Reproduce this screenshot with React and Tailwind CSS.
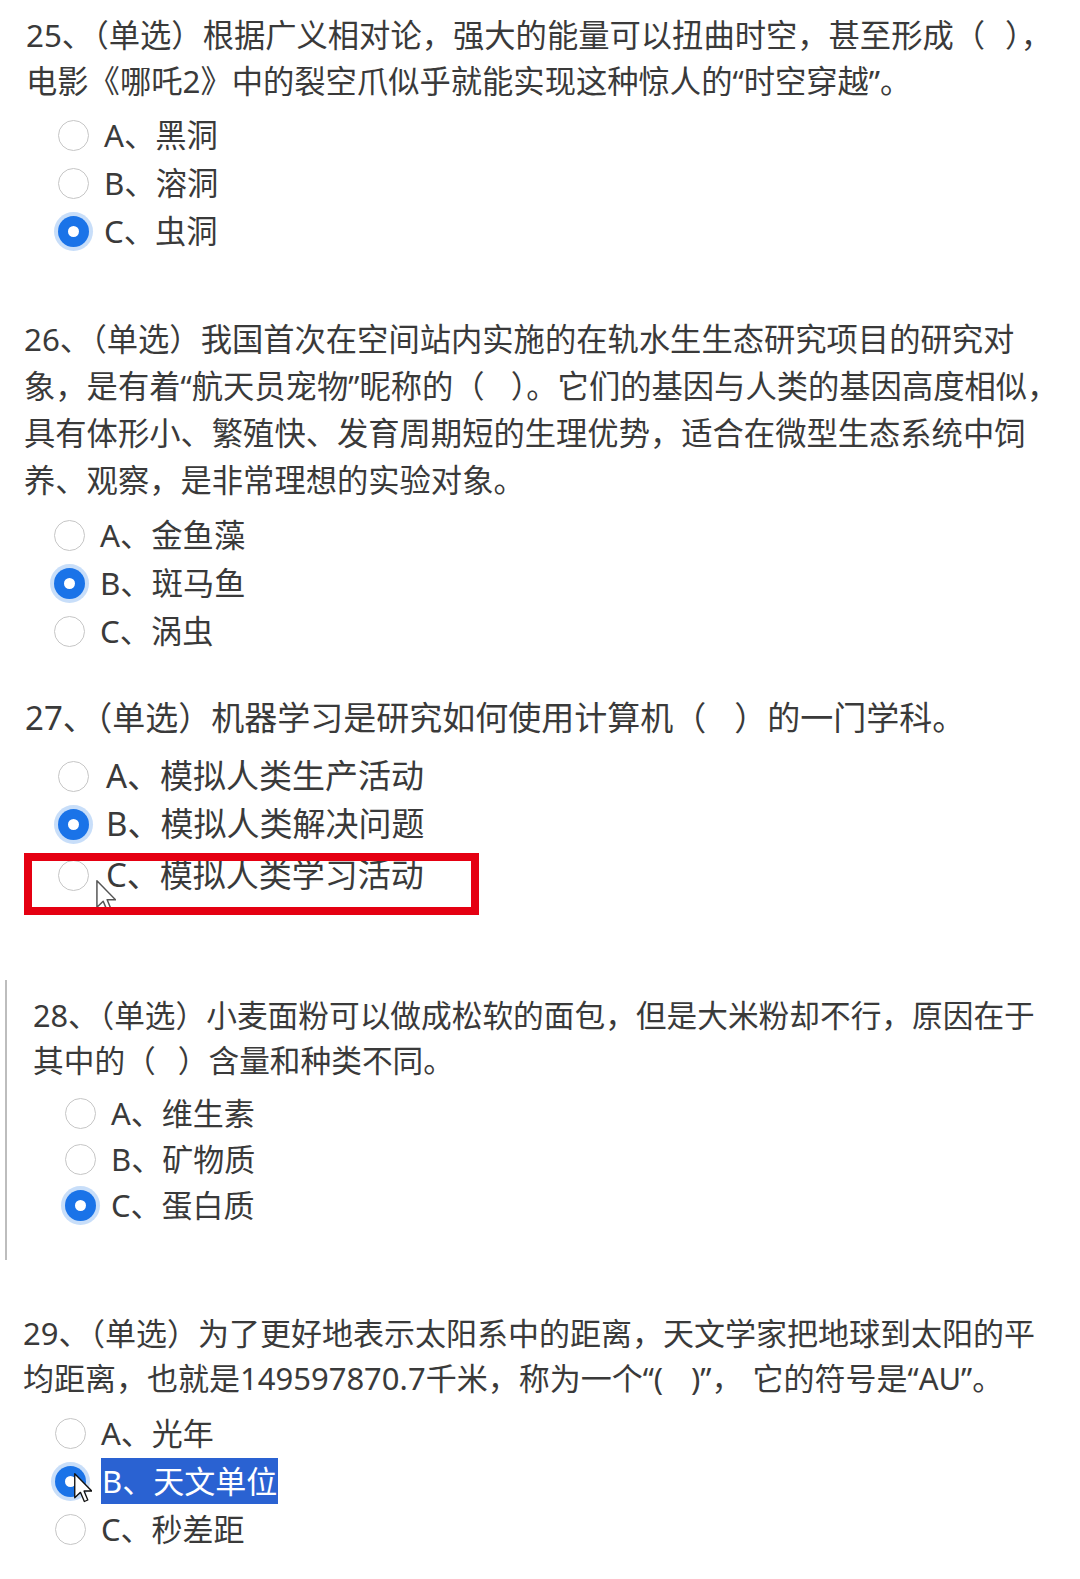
import React from 'react';

const Radio = ({ checked }) =>
  checked ? (
    <span className="flex h-[31px] w-[31px] shrink-0 items-center justify-center rounded-full bg-[#1a73e8] shadow-[0_0_0_4px_rgba(26,115,232,0.24)]">
      <span className="h-[11px] w-[11px] rounded-full bg-white" />
    </span>
  ) : (
    <span className="h-[31px] w-[31px] shrink-0 rounded-full border-[1.5px] border-[#c6c6c6] bg-white" />
  );

const Cursor = ({ className, fill, stroke, w = 18, h = 30 }) => (
  <svg className={className} viewBox="0 0 12 20" width={w} height={h}>
    <path d="M0.5 0.5 L0.5 16.5 L4.3 12.9 L6.9 19 L9.2 18 L6.7 12 L11.8 12 Z" fill={fill} stroke={stroke} strokeWidth="0.9" strokeLinejoin="round" />
  </svg>
);

// blank in the question text: （   ）
const Blank = ({ gap }) => (
  <>
    （<span className={`inline-block ${gap}`} />）
  </>
);

const Option = ({ label, checked, rowCls, gapCls, children }) => (
  <div className={`relative flex items-center ${rowCls}`}>
    <Radio checked={checked} />
    <span className={gapCls}>{label}</span>
    {children}
  </div>
);

export default function App() {
  return (
    <div className="min-h-[1579px] w-[1080px] bg-white pt-[12px] font-['Noto_Sans','Noto_Sans_CJK_SC',sans-serif] text-[#3a3a3a]">
      {/* 25 */}
      <section className="text-[31.3px]">
        <p className="whitespace-nowrap pl-[26px] leading-[46px]">
          25、（单选）根据广义相对论，强大的能量可以扭曲时空，甚至形成<Blank gap="w-[20px]" />，
          <br />
          电影《哪吒2》中的裂空爪似乎就能实现这种惊人的“时空穿越”。
        </p>
        <div className="mt-[7px]">
          <Option label="A、黑洞" rowCls="h-[48px] pl-[58px]" gapCls="ml-[15px]" />
          <Option label="B、溶洞" rowCls="h-[48px] pl-[58px]" gapCls="ml-[15px]" />
          <Option label="C、虫洞" checked rowCls="h-[48px] pl-[58px]" gapCls="ml-[15px]" />
        </div>
      </section>

      {/* 26 */}
      <section className="mt-[61px] text-[31.3px]">
        <p className="whitespace-nowrap pl-[24px] leading-[47px]">
          26、（单选）我国首次在空间站内实施的在轨水生生态研究项目的研究对
          <br />
          象，是有着“航天员宠物”昵称的<Blank gap="w-[26px]" />。它们的基因与人类的基因高度相似，
          <br />
          具有体形小、繁殖快、发育周期短的生理优势，适合在微型生态系统中饲
          <br />
          养、观察，是非常理想的实验对象。
        </p>
        <div className="mt-[7px]">
          <Option label="A、金鱼藻" rowCls="h-[48px] pl-[54px]" gapCls="ml-[15px]" />
          <Option label="B、斑马鱼" checked rowCls="h-[48px] pl-[54px]" gapCls="ml-[15px]" />
          <Option label="C、涡虫" rowCls="h-[48px] pl-[54px]" gapCls="ml-[15px]" />
        </div>
      </section>

      {/* 27 */}
      <section className="mt-[40px] text-[33px]">
        <p className="whitespace-nowrap pl-[25px] leading-[46px]">
          27、（单选）机器学习是研究如何使用计算机<Blank gap="w-[28px]" />的一门学科。
        </p>
        <div className="mt-[11px]">
          <Option label="A、模拟人类生产活动" rowCls="h-[48px] pl-[58px]" gapCls="ml-[17px]" />
          <Option label="B、模拟人类解决问题" checked rowCls="h-[48px] pl-[58px]" gapCls="ml-[17px]" />
          <Option label="C、模拟人类学习活动" rowCls="mt-[3px] h-[48px] pl-[58px]" gapCls="ml-[17px]">
            <Cursor className="absolute left-[96px] top-[29px]" fill="rgba(255,255,255,0.6)" stroke="#555" w={20} h={33} />
            <div className="absolute left-[24px] top-[2px] h-[62px] w-[455px] border-[8px] border-[#e50012]" />
          </Option>
        </div>
      </section>

      {/* 28 */}
      <section className="ml-[5px] mt-[81px] border-l-2 border-[#bdbdbd] pb-[32px] pt-[13px] text-[31px]">
        <p className="whitespace-nowrap pl-[26px] text-[30.7px] leading-[45px]">
          28、（单选）小麦面粉可以做成松软的面包，但是大米粉却不行，原因在于
          <br />
          其中的<Blank gap="w-[22px]" />含量和种类不同。
        </p>
        <div className="mt-[7px]">
          <Option label="A、维生素" rowCls="h-[46px] pl-[58px]" gapCls="ml-[15px]" />
          <Option label="B、矿物质" rowCls="h-[46px] pl-[58px]" gapCls="ml-[15px]" />
          <Option label="C、蛋白质" checked rowCls="h-[46px] pl-[58px]" gapCls="ml-[15px]" />
        </div>
      </section>

      {/* 29 */}
      <section className="mt-[51px] text-[31px]">
        <p className="whitespace-nowrap pl-[23px] leading-[45px]">
          29、（单选）为了更好地表示太阳系中的距离，天文学家把地球到太阳的平
          <br />
          均距离，也就是149597870.7千米，称为一个“(<span className="inline-block w-[28px]" />)”，<span className="inline-block w-[10px]" />它的符号是“AU”。
        </p>
        <div className="mt-[8px]">
          <Option label="A、光年" rowCls="h-[48px] pl-[55px]" gapCls="ml-[15px]" />
          <div className="relative flex h-[48px] items-center pl-[55px]">
            <Radio checked />
            <span className="ml-[15px] h-[46px] bg-[#2a62d2] pl-[1px] pr-[1px] leading-[46px] text-white">B、天文单位</span>
            <Cursor className="absolute left-[74px] top-[16px]" fill="#fff" stroke="#111" />
          </div>
          <Option label="C、秒差距" rowCls="h-[48px] pl-[55px]" gapCls="ml-[15px]" />
        </div>
      </section>
    </div>
  );
}
